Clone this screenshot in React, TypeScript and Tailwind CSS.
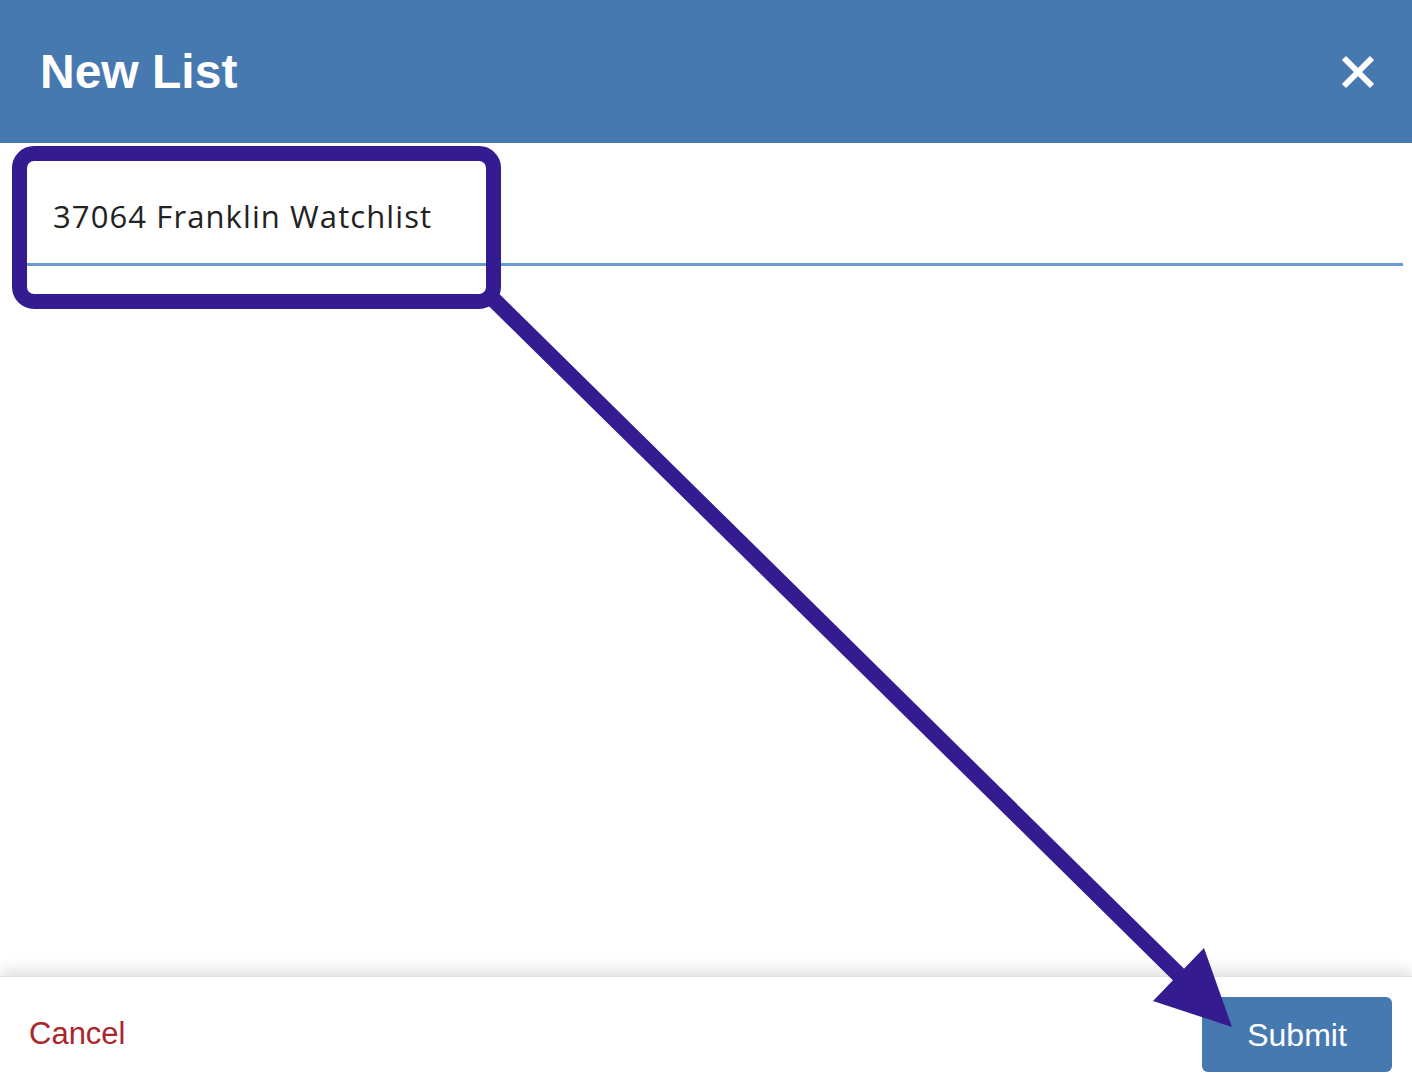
import React from "react"

export default function App() {
  return (
    <div className="relative flex h-[1084px] w-full flex-col overflow-hidden bg-white">
      <header className="flex h-[143px] shrink-0 items-center justify-between bg-[#4779b1] pl-[40px] pr-[34px]">
        <h1 className="text-[48px] font-bold leading-none text-white [font-family:'Liberation_Sans',Arial,sans-serif]">
          New List
        </h1>
        <button className="flex h-[40px] w-[40px] items-center justify-center">
          <svg width="34" height="34" viewBox="0 0 34 34">
            <path d="M3 3 L31 31 M31 3 L3 31" stroke="white" strokeWidth="6" />
          </svg>
        </button>
      </header>

      <main className="flex-1">
        <div className="ml-[14px] mr-[9px] flex h-[123px] items-end border-b-[3px] border-[#6b9bd1] pb-[24px] pl-[39px]">
          <span className="text-[31px] leading-[45px] tracking-[1.1px] text-[#222] [font-family:'Open_Sans',sans-serif]">
            37064 Franklin Watchlist
          </span>
        </div>
      </main>

      <footer className="relative flex h-[108px] shrink-0 items-center justify-between border-t border-[#e2e2e2] bg-white pl-[29px] pr-[20px] pt-[8px] shadow-[0_-6px_14px_rgba(0,0,0,0.12)]">
        <button className="text-[31px] text-[#a8262c] [font-family:'Liberation_Sans',Arial,sans-serif]">Cancel</button>
        <button className="h-[75px] w-[190px] rounded-[6px] bg-[#4779b1] text-[32px] text-white [font-family:'Liberation_Sans',Arial,sans-serif]">
          Submit
        </button>
      </footer>

      {/* annotation overlay */}
      <div className="pointer-events-none absolute left-[12px] top-[146px] h-[163px] w-[489px] rounded-[22px] border-[15px] border-[#341b8f]" />
      <svg className="pointer-events-none absolute left-0 top-0" width="1412" height="1084">
        <line x1="489" y1="295" x2="1180" y2="976" stroke="#341b8f" strokeWidth="16" />
        <polygon points="1232,1027 1153,1001 1204,948" fill="#341b8f" />
      </svg>
    </div>
  )
}
